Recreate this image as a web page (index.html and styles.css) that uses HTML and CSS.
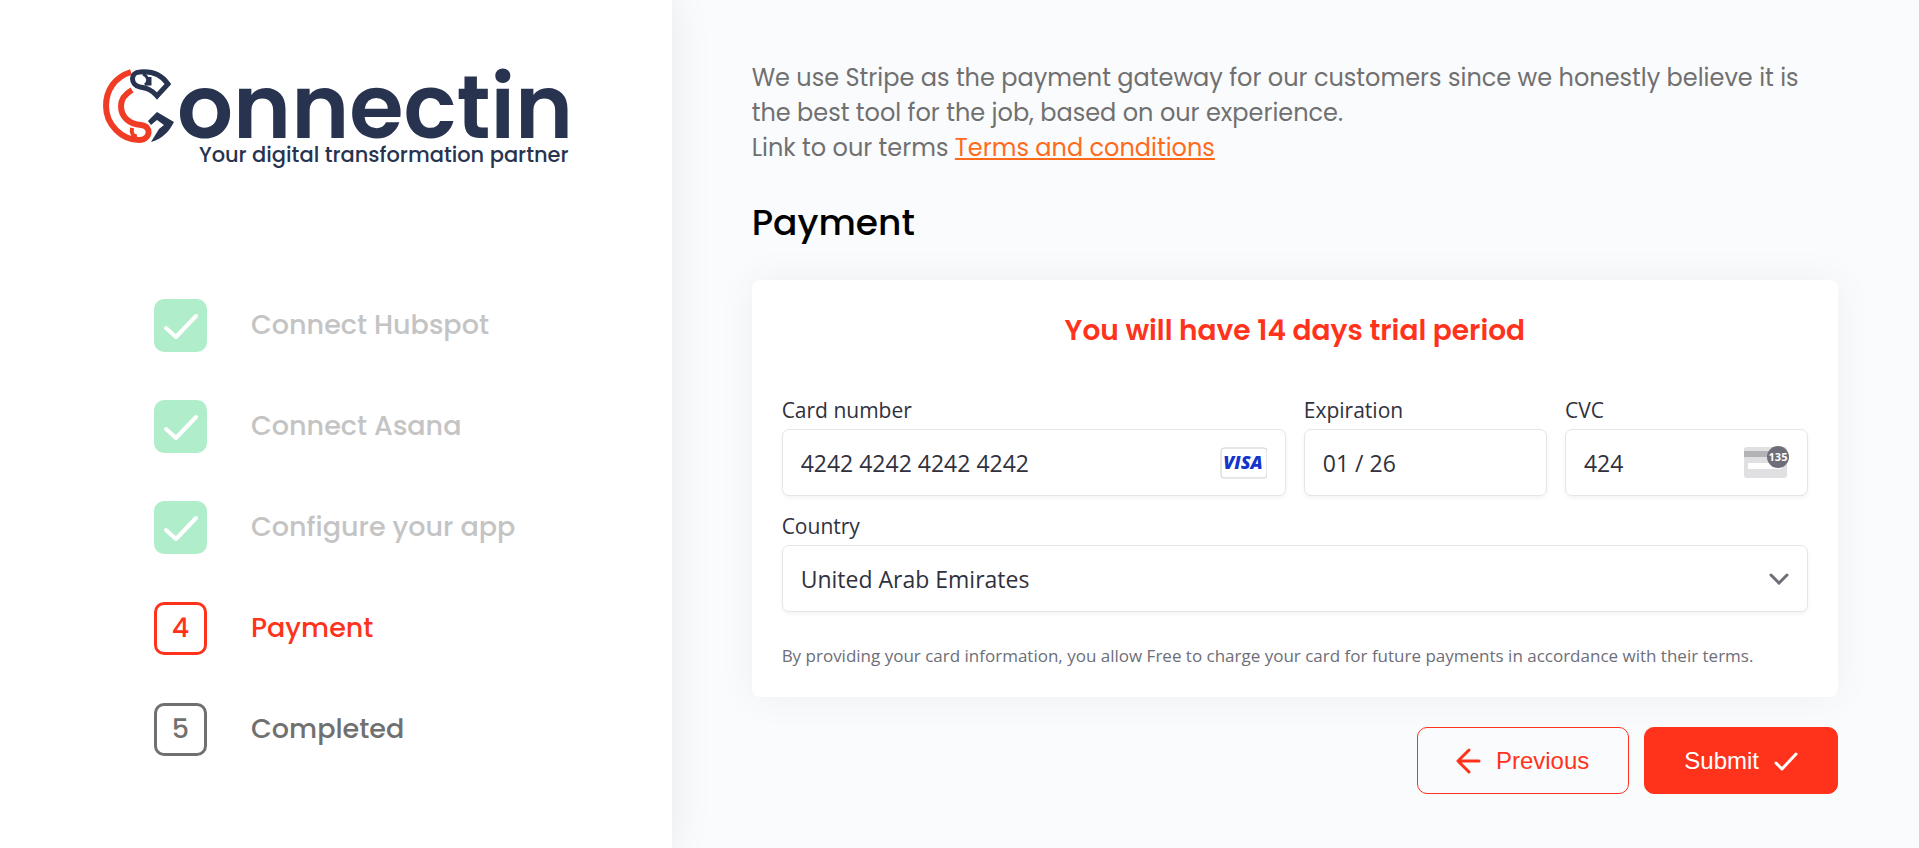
FILE: index.html
```html
<!DOCTYPE html>
<html lang="en">
<head>
    <meta charset="UTF-8">
    <meta name="viewport" content="width=device-width, initial-scale=1.0">
    <title>Connectin - Payment</title>
    <link rel="stylesheet" href="styles.css">
</head>
<body>
    <div class="page">
        <aside class="sidebar">
            <svg class="logo" viewBox="0 0 466 102" role="img" aria-label="Connectin">
                <g fill="none" stroke="#f03c25" stroke-width="6">
                    <path d="M28 4 C12 9 3 22 3 38 C3 57 19 72 36 72 C48 72 49 58 38 57 C26 56 18 49 18 38 C18 31 22 26 29 22" />
                    <path d="M29 60 C28 65 30 69 34 68" stroke-width="4" />
                </g>
                <g fill="none" stroke="#28334f" stroke-width="5">
                    <path d="M37 4 C48 3 58 6 65 16 L54 28 C48 21 43 20 37 19 C27 17 27 4 37 4 Z" />
                    <path d="M40 6 C46 9 46 14 42 17 M47 9 V16 H43" stroke-width="3" />
                </g>
                <path fill="#28334f" d="M45 53 L54 44 L71 54 C66 64 59 71 48 74 L56 61 L61 57 L54 52 L48 57 Z" />
                <text class="logo-name" x="74" y="70">onnectin</text>
                <text class="logo-tagline" x="96" y="94">Your digital transformation partner</text>
            </svg>

            <ol class="steps">
                <li class="step step-done">
                    <span class="step-box"><svg viewBox="0 0 53 53"><path d="M12 29 L22 38 L42 17" /></svg></span>
                    <span>Connect Hubspot</span>
                </li>
                <li class="step step-done">
                    <span class="step-box"><svg viewBox="0 0 53 53"><path d="M12 29 L22 38 L42 17" /></svg></span>
                    <span>Connect Asana</span>
                </li>
                <li class="step step-done">
                    <span class="step-box"><svg viewBox="0 0 53 53"><path d="M12 29 L22 38 L42 17" /></svg></span>
                    <span>Configure your app</span>
                </li>
                <li class="step step-active">
                    <span class="step-box">4</span>
                    <span>Payment</span>
                </li>
                <li class="step">
                    <span class="step-box">5</span>
                    <span>Completed</span>
                </li>
            </ol>
        </aside>

        <main class="content">
            <p class="intro">
                We use Stripe as the payment gateway for our customers since we honestly believe it is the best tool for the job, based on our experience.<br>
                Link to our terms <a href="#">Terms and conditions</a>
            </p>
            <h1 class="title">Payment</h1>

            <form id="paymentForm">
                <div class="card">
                    <h2 class="trial">You will have 14 days trial period</h2>
                    <div class="fields">
                        <div class="field field-number">
                            <label for="cardNumber">Card number</label>
                            <div class="control">
                                <input type="text" id="cardNumber" value="4242 4242 4242 4242">
                                <svg class="visa-icon" viewBox="0 0 48 32" aria-hidden="true">
                                    <rect x="2" y="1" width="46" height="30" rx="3" fill="#fff" stroke="#cfcfd2" />
                                    <text x="24" y="22" text-anchor="middle">VISA</text>
                                </svg>
                            </div>
                        </div>
                        <div class="field">
                            <label for="expiration">Expiration</label>
                            <div class="control">
                                <input type="text" id="expiration" value="01 / 26">
                            </div>
                        </div>
                        <div class="field">
                            <label for="cvc">CVC</label>
                            <div class="control">
                                <input type="text" id="cvc" value="424">
                                <svg class="cvc-icon" viewBox="0 0 48 34" aria-hidden="true">
                                    <rect x="3" y="1" width="43" height="31" rx="3" fill="#e0e0e2" />
                                    <rect x="3" y="5" width="43" height="6" fill="#b3b3b7" />
                                    <rect x="7" y="17" width="34" height="6" rx="1" fill="#fff" />
                                    <circle cx="37" cy="11" r="11" fill="#6d6e78" />
                                    <text x="37" y="15" text-anchor="middle">135</text>
                                </svg>
                            </div>
                        </div>
                        <div class="field field-country">
                            <label for="country">Country</label>
                            <div class="control">
                                <select id="country">
                                    <option>United Arab Emirates</option>
                                </select>
                                <svg class="arrow-icon" viewBox="0 0 20 12" aria-hidden="true"><path d="M2 2 L10 10 L18 2" /></svg>
                            </div>
                        </div>
                    </div>
                    <p class="note">By providing your card information, you allow Free to charge your card for future payments in accordance with their terms.</p>
                </div>

                <div class="buttons">
                    <button type="button" class="button button-previous">
                        <svg viewBox="0 0 24 24"><path d="M22 12 H2 M12 1 L1 12 L12 23" /></svg>
                        Previous
                    </button>
                    <button type="submit" class="button button-submit">
                        Submit
                        <svg viewBox="0 0 24 24"><path d="M2 14 L8 20 L22 5" /></svg>
                    </button>
                </div>
            </form>
        </main>
    </div>
</body>
</html>
```

FILE: styles.css
```css
* {
    box-sizing: border-box;
}

body {
    font-family: Poppins, Inter, sans-serif;
    background-color: #fafbfd;
    color: #707070;
    margin: 0;
}

.page {
    display: flex;
    min-height: 100vh;
}

/* Left column */
.sidebar {
    width: 35%;
    padding: 68px 103px 0;
    background-color: #ffffff;
    box-shadow: 0 0 40px rgba(0, 0, 0, 0.08);
}

.logo {
    display: block;
    width: 100%;
    height: auto;
    overflow: visible;
}

.logo-name {
    fill: #28334f;
    font-size: 88px;
    font-weight: 600;
}

.logo-tagline {
    fill: #28334f;
    font-size: 21px;
    font-weight: 500;
}

.steps {
    display: flex;
    flex-direction: column;
    gap: 48px;
    margin: 129px 0 0;
    padding: 0 0 0 51px;
    list-style: none;
}

.step {
    display: flex;
    align-items: center;
    gap: 44px;
    font-size: 27px;
    font-weight: 500;
}

.step-box {
    display: flex;
    align-items: center;
    justify-content: center;
    width: 53px;
    height: 53px;
    border: 3px solid #707070;
    border-radius: 10px;
}

.step-done {
    color: #c4c4c4;
}

    .step-done .step-box {
        border: none;
        background-color: #b0eecb;
    }

    .step-done path {
        fill: none;
        stroke: #ffffff;
        stroke-width: 4;
        stroke-linecap: round;
        stroke-linejoin: round;
    }

.step-active {
    color: #ff331c;
}

    .step-active .step-box {
        border-color: #ff331c;
    }

/* Right column */
.content {
    flex: 1;
    padding: 60px 81px 54px 80px;
}

.intro {
    margin: 0;
    font-size: 24px;
    line-height: 35px;
}

    .intro a {
        color: #ff6b1a;
    }

.title {
    margin: 31px 0 30px;
    color: #000000;
    font-size: 36px;
    font-weight: 500;
    line-height: 54px;
}

.card {
    padding: 30px 30px 28px;
    border-radius: 8px;
    background-color: #ffffff;
    box-shadow: 0 0 40px rgba(0, 0, 0, 0.05);
}

.trial {
    margin: 0 0 44px;
    color: #ff331c;
    font-size: 28px;
    font-weight: 600;
    line-height: 42px;
    text-align: center;
}

.fields {
    display: grid;
    grid-template-columns: repeat(4, minmax(0, 1fr));
    gap: 16px 18px;
    color: #30313d;
    font-family: "Segoe UI", "Open Sans", sans-serif;
}

.field-number {
    grid-column: span 2;
}

.field-country {
    grid-column: span 4;
}

.field label {
    display: block;
    margin-bottom: 5px;
    font-size: 21px;
    line-height: 28px;
}

.control {
    display: flex;
    align-items: center;
    height: 67px;
    padding-right: 18px;
    border: 1px solid #e6e6e6;
    border-radius: 7px;
    background-color: #ffffff;
    box-shadow: 0 2px 4px rgba(0, 0, 0, 0.05);
}

    .control input,
    .control select {
        flex: 1;
        min-width: 0;
        height: 100%;
        padding: 0 0 0 18px;
        border: none;
        outline: none;
        appearance: none;
        background: none;
        color: #30313d;
        font-family: inherit;
        font-size: 23px;
    }

.visa-icon {
    width: 48px;
    height: 32px;
}

    .visa-icon text {
        fill: #1434cb;
        font-size: 18px;
        font-style: italic;
        font-weight: 800;
    }

.cvc-icon {
    width: 48px;
    height: 34px;
}

    .cvc-icon text {
        fill: #ffffff;
        font-size: 11px;
        font-weight: 700;
    }

.arrow-icon {
    width: 20px;
    height: 12px;
}

    .arrow-icon path {
        fill: none;
        stroke: #6d6e78;
        stroke-width: 3;
        stroke-linecap: round;
    }

.note {
    margin: 31px 0 0;
    color: #6d6e78;
    font-family: "Segoe UI", "Open Sans", sans-serif;
    font-size: 17px;
    line-height: 26px;
}

.buttons {
    display: flex;
    justify-content: flex-end;
    gap: 15px;
    margin-top: 30px;
}

.button {
    display: flex;
    align-items: center;
    gap: 15px;
    height: 67px;
    padding: 0 39px;
    border: 1px solid #ff331c;
    border-radius: 10px;
    cursor: pointer;
    font-family: Arial, "Liberation Sans", sans-serif;
    font-size: 24px;
}

    .button svg {
        width: 24px;
        height: 24px;
        overflow: visible;
    }

    .button path {
        fill: none;
        stroke: currentColor;
        stroke-width: 3;
        stroke-linecap: round;
        stroke-linejoin: round;
    }

.button-previous {
    background-color: transparent;
    color: #ff331c;
}

.button-submit {
    background-color: #ff331c;
    color: #ffffff;
}
```
